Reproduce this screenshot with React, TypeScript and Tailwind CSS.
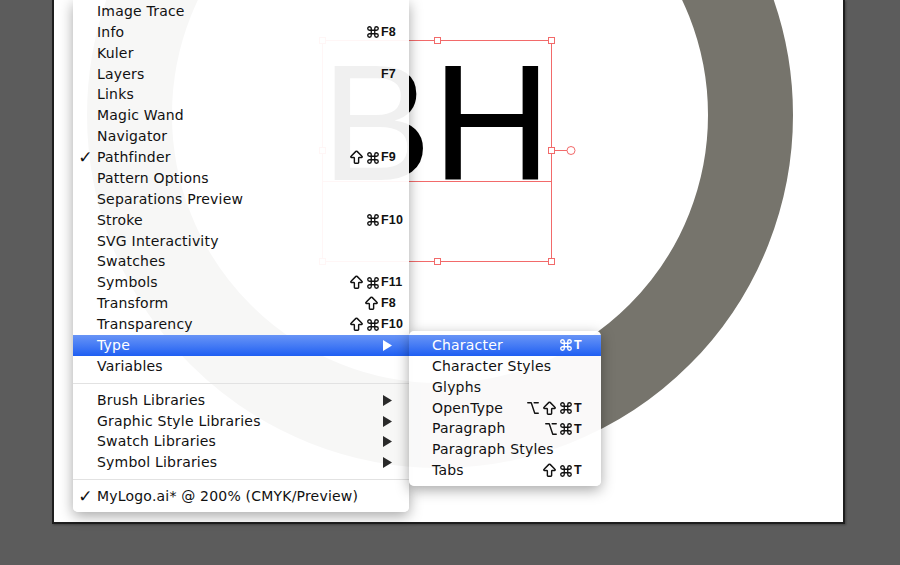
import React from "react";
import { ArrowBigUp, Command, Option } from "lucide-react";

type Item = {
  label?: string;
  check?: boolean;
  mods?: string;
  k?: string;
  arrow?: boolean;
  active?: boolean;
  sep?: boolean;
};

const mainItems: Item[] = [
  { label: "Image Trace" },
  { label: "Info", mods: "C", k: "F8" },
  { label: "Kuler" },
  { label: "Layers", k: "F7" },
  { label: "Links" },
  { label: "Magic Wand" },
  { label: "Navigator" },
  { label: "Pathfinder", check: true, mods: "SC", k: "F9" },
  { label: "Pattern Options" },
  { label: "Separations Preview" },
  { label: "Stroke", mods: "C", k: "F10" },
  { label: "SVG Interactivity" },
  { label: "Swatches" },
  { label: "Symbols", mods: "SC", k: "F11" },
  { label: "Transform", mods: "S", k: "F8" },
  { label: "Transparency", mods: "SC", k: "F10" },
  { label: "Type", arrow: true, active: true },
  { label: "Variables" },
  { sep: true },
  { label: "Brush Libraries", arrow: true },
  { label: "Graphic Style Libraries", arrow: true },
  { label: "Swatch Libraries", arrow: true },
  { label: "Symbol Libraries", arrow: true },
  { sep: true },
  { label: "MyLogo.ai* @ 200% (CMYK/Preview)", check: true },
];

const typeItems: Item[] = [
  { label: "Character", mods: "C", k: "T", active: true },
  { label: "Character Styles" },
  { label: "Glyphs" },
  { label: "OpenType", mods: "OSC", k: "T" },
  { label: "Paragraph", mods: "OC", k: "T" },
  { label: "Paragraph Styles" },
  { label: "Tabs", mods: "SC", k: "T" },
];

// O = option, S = shift, C = command
const ModKey = ({ m }: { m: string }) => {
  if (m === "O") return <Option size={14} strokeWidth={2.4} className="shrink-0" />;
  if (m === "S") return <ArrowBigUp size={17} strokeWidth={2} className="shrink-0" />;
  return <Command size={14} strokeWidth={2.3} className="shrink-0" />;
};

const Arrow = ({ active }: { active?: boolean }) => (
  <svg width="9" height="11" viewBox="0 0 9 11" className="ml-[2px]">
    <polygon points="0,0 9,5.5 0,11" fill={active ? "#ffffff" : "#2a2a2a"} />
  </svg>
);

const MenuRow = ({ item, labelCol, keyCol }: { item: Item; labelCol: string; keyCol: string }) => {
  if (item.sep)
    return (
      <div className="flex h-[13px] items-center">
        <div className="h-px w-full bg-[#e2e2e2]" />
      </div>
    );
  return (
    <div
      className={`flex h-[20.875px] items-center ${
        item.active ? "bg-linear-to-b from-[#6894f6] to-[#1e5ef2] text-white" : "text-[#111]"
      }`}
    >
      <span className={`${labelCol} shrink-0 pl-[1px] text-center text-[17px] leading-none`}>
        {item.check ? "✓" : ""}
      </span>
      <span className="flex-1 whitespace-nowrap">{item.label}</span>
      <span className="flex shrink-0 items-center gap-[1px] pr-[1px]">
        {item.mods?.split("").map((m, i) => (
          <ModKey key={i} m={m} />
        ))}
      </span>
      <span
        className={`${keyCol} flex shrink-0 items-center font-['Liberation_Sans',sans-serif] text-[12.5px] font-bold`}
      >
        {item.k}
        {item.arrow && <Arrow active={item.active} />}
      </span>
    </div>
  );
};

const SelectionBox = () => {
  const c = "#f26a6a";
  const handles = [
    [268, 40],
    [383, 40],
    [497, 40],
    [268, 150],
    [497, 150],
    [268, 261],
    [383, 261],
    [497, 261],
  ];
  return (
    <svg className="absolute left-0 top-0" width="791" height="522">
      <rect x="268.5" y="40.5" width="229" height="221" fill="none" stroke={c} strokeWidth="1" />
      <line x1="268" y1="181.5" x2="497" y2="181.5" stroke={c} strokeWidth="1" />
      <line x1="500" y1="150.5" x2="513" y2="150.5" stroke={c} strokeWidth="1" />
      <circle cx="517" cy="150.5" r="4" fill="#fff" stroke={c} strokeWidth="1" />
      {handles.map(([x, y], i) => (
        <rect key={i} x={x - 2.5} y={y - 2.5} width="6" height="6" fill="#fff" stroke={c} strokeWidth="1" />
      ))}
    </svg>
  );
};

export default function App() {
  return (
    <div className="relative h-[565px] w-[900px] overflow-hidden bg-[#5c5c5c] font-['DejaVu_Sans',sans-serif]">
      {/* artboard */}
      <div className="relative ml-[52px] h-[524px] w-[793px] border-x-2 border-b-2 border-[#1e1e1e] bg-white shadow-[1px_1px_2px_rgba(0,0,0,0.3)]">
        <svg className="absolute left-0 top-0" width="789" height="522">
          <circle cx="386" cy="115" r="310.5" fill="none" stroke="#76746c" strokeWidth="85" />
        </svg>
        <span className="absolute left-[267px] top-[40px] font-['Liberation_Sans',sans-serif] text-[166px] leading-none text-black">
          BH
        </span>
        <SelectionBox />
      </div>

      {/* main menu */}
      <div className="absolute left-[73px] top-0 w-[336px] rounded-b-[5px] bg-white/[0.94] pb-[5px] pt-px text-[14px] tracking-[0.2px] shadow-[0_4px_14px_rgba(0,0,0,0.35)]">
        {mainItems.map((it, i) => (
          <MenuRow key={i} item={it} labelCol="w-[24px]" keyCol="w-[28px]" />
        ))}
      </div>

      {/* Type submenu */}
      <div className="absolute left-[409px] top-[331px] w-[192px] rounded-[5px] bg-white/[0.96] pb-[5px] pt-[4px] text-[14px] tracking-[0.2px] shadow-[0_4px_14px_rgba(0,0,0,0.35)]">
        {typeItems.map((it, i) => (
          <MenuRow key={i} item={it} labelCol="w-[23px]" keyCol="w-[27px]" />
        ))}
      </div>
    </div>
  );
}
